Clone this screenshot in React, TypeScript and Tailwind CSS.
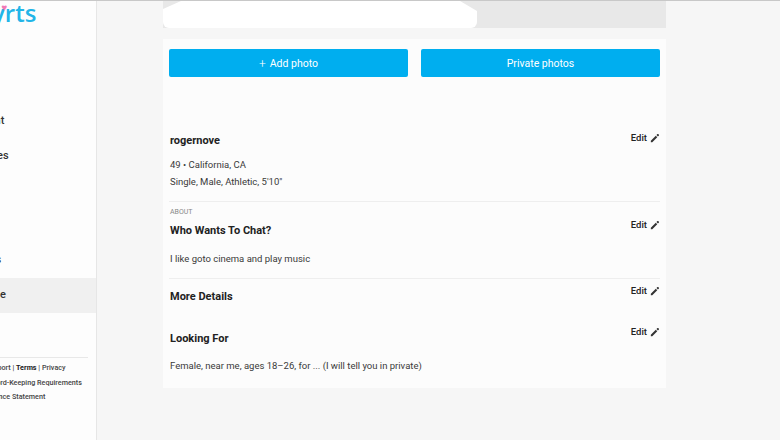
function Pencil() {
  return (
    <svg viewBox="0 0 24 24" className="h-[10px] w-[10px] fill-[#333]">
      <path d="M2 18.5V22h3.5L17.4 10.1l-3.5-3.5L2 18.5zM21.4 6.1a1.2 1.2 0 0 0 0-1.7l-1.8-1.8a1.2 1.2 0 0 0-1.7 0L15.5 5l3.5 3.5 2.4-2.4z" />
    </svg>
  );
}

function EditLink() {
  return (
    <span className="flex h-[10px] items-center gap-[3px] text-[9.5px] font-medium leading-none text-[#222]">
      Edit
      <Pencil />
    </span>
  );
}

function Heading({ children, className = "" }: { children: string; className?: string }) {
  return <h3 className={`pl-[1px] text-[11px] font-bold leading-[14px] text-[#222] ${className}`}>{children}</h3>;
}

function Body({ children, className = "" }: { children: string; className?: string }) {
  return <p className={`pl-[1px] text-[9.5px] leading-[14px] text-[#3a3a3a] ${className}`}>{children}</p>;
}

function Sidebar() {
  return (
    <aside className="flex h-[439px] w-[97px] shrink-0 flex-col overflow-hidden border-r border-[#e6e6e6] bg-[#fdfdfd]">
      <div className="-ml-[54px] -mt-[2px] flex h-[38px] items-start font-['Open_Sans',sans-serif] text-[24px] font-semibold leading-[28px] text-[#22b5e8]">
        <span className="relative">
          Flirtyrts
          <span className="absolute right-[29px] top-[3px] text-[10px] leading-none text-[#f178b6]">♥</span>
        </span>
      </div>
      <nav className="mt-[67px] flex flex-col text-[11px] font-medium text-[#333]">
        <div className="flex h-[35px] items-center">
          <span className="-ml-[40px] whitespace-nowrap">Spotlight</span>
        </div>
        <div className="flex h-[35px] items-center">
          <span className="-ml-[42px] whitespace-nowrap">Messages</span>
        </div>
        <div className="mt-[69px] flex h-[35px] items-center">
          <span className="-ml-[44px] whitespace-nowrap">Favorites</span>
        </div>
        <div className="flex h-[35px] items-center bg-[#f0f0f0]">
          <span className="-ml-[44px] whitespace-nowrap">My Profile</span>
        </div>
      </nav>
      <div className="mt-[44px] mr-[8px] border-t border-[#e8e8e8] pt-[3px] text-[7.2px] font-medium leading-[14.7px] text-[#444]">
        <p className="-ml-[15px] whitespace-nowrap">
          Support | <span className="font-bold text-[#222]">Terms</span> | Privacy
        </p>
        <p className="-ml-[16px] whitespace-nowrap">Record-Keeping Requirements</p>
        <p className="-ml-[28px] whitespace-nowrap">Compliance Statement</p>
      </div>
    </aside>
  );
}

export default function App() {
  return (
    <div className="h-[440px] w-[780px] overflow-hidden bg-[#f6f6f6] font-['Roboto',sans-serif]">
      <div className="h-px bg-[#c8c8c8]" />
      <div className="flex">
        <Sidebar />
        <main className="ml-[66px] w-[503px]">
          <div className="h-[27px] bg-[#e8e8e8]">
            <div className="h-full w-[314px] rounded-b-[6px] bg-white [clip-path:polygon(0_8px,18px_0,297px_0,100%_10px,100%_100%,0_100%)]" />
          </div>
          <section className="mt-[11px] h-[349px] bg-[#fcfcfc] px-[6px] pt-[10px]">
            <div className="flex gap-[13px]">
              <button className="flex h-[28px] flex-1 items-center justify-center gap-[4px] rounded-[2px] bg-[#00aeef] pt-[1px] text-[10.5px] text-white">
                <span className="text-[12px] font-light leading-none">+</span>
                Add photo
              </button>
              <button className="h-[28px] flex-1 rounded-[2px] bg-[#00aeef] pt-[1px] text-[10.5px] text-white">
                Private photos
              </button>
            </div>

            <div className="mt-[56px] flex items-start justify-between">
              <Heading className="mt-[1px]">rogernove</Heading>
              <EditLink />
            </div>
            <Body className="mt-[10px]">49 • California, CA</Body>
            <Body className="mt-[3px]">Single, Male, Athletic, 5'10"</Body>

            <div className="mt-[12px] border-t border-[#eeeeee] pt-[6px]">
              <p className="pl-[1px] text-[7px] leading-[8px] text-[#888]">ABOUT</p>
              <div className="mt-[4px] flex items-start justify-between">
                <Heading className="mt-[4px]">Who Wants To Chat?</Heading>
                <EditLink />
              </div>
              <Body className="mt-[14px]">I like goto cinema and play music</Body>
            </div>

            <div className="mt-[12px] border-t border-[#eeeeee] pt-[7px]">
              <div className="flex items-start justify-between">
                <Heading className="mt-[4px]">More Details</Heading>
                <EditLink />
              </div>
            </div>

            <div className="mt-[23px] flex items-start justify-between">
              <Heading className="mt-[5px]">Looking For</Heading>
              <EditLink />
            </div>
            <Body className="mt-[13px]">Female, near me, ages 18–26, for ... (I will tell you in private)</Body>
          </section>
        </main>
      </div>
    </div>
  );
}
